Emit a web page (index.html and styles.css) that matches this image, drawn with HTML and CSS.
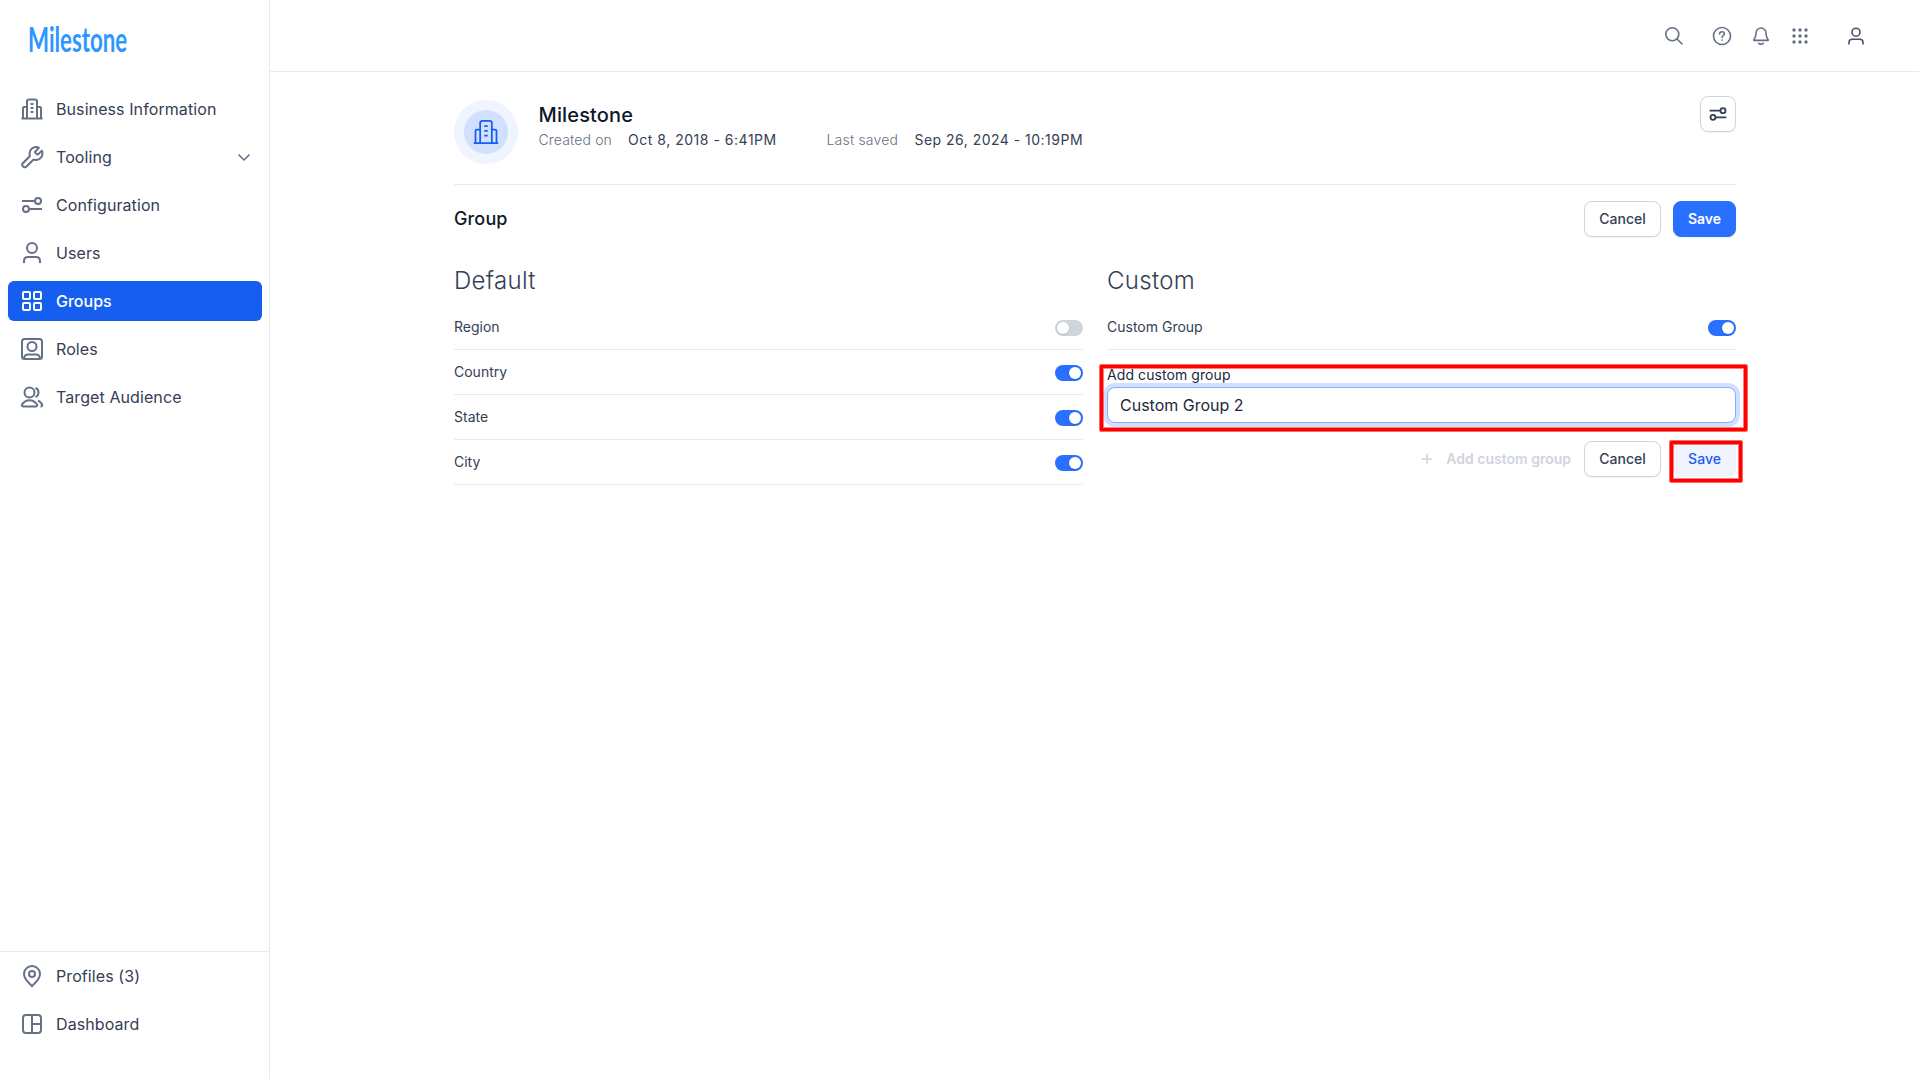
FILE: index.html
```html
<!DOCTYPE html>
<html lang="en">
<head>
<meta charset="utf-8">
<title>Milestone - Groups</title>
<link rel="stylesheet" href="styles.css">
</head>
<body>
<svg class="sprite" aria-hidden="true">
  <symbol id="building" viewBox="0 0 24 24"><path d="M1.500 21.500h21M3 21.500V11.200c0-.7.5-1.200 1.200-1.200H7m10 0h2.800c.7 0 1.200.500 1.200 1.200v10.300M7 21.500V4.200C7 3 7.800 2.500 9 2.500h6c1.200 0 2 .5 2 1.700v17.300M10.500 7h3M10.500 11h3M10.500 15h3"/></symbol>
  <symbol id="sliders" viewBox="0 0 24 24"><path d="M2 8h13M9 16h13"/><circle cx="18" cy="8" r="3"/><circle cx="6" cy="16" r="3"/></symbol>
  <symbol id="user" viewBox="0 0 24 24"><circle cx="12" cy="7" r="5"/><path d="M4 22v-2c0-2.600 1.400-4 4-4h8c2.600 0 4 1.400 4 4v2"/></symbol>
</svg>
<div class="app">
  <aside class="sidebar">
    <div class="brand"><span class="logo">Milestone</span></div>
    <nav class="nav">
      <a class="item"><svg class="icon"><use href="#building"/></svg>Business Information</a>
      <a class="item"><svg class="icon" viewBox="0 0 24 24"><path d="M15.600 6.300c-.4.400-.6.600-.6.900 0 .3.200.5.600.9l1 1c.4.400.6.500.9.500s.5-.2.900-.5l3.500-3.500c.4.900.6 1.800.6 2.800a6.500 6.500 0 0 1-8.100 6.300c-.5-.1-.8-.1-1 0-.2.100-.3.200-.6.500l-6.500 6.500a2.500 2.500 0 0 1-3.500-3.500l6.500-6.500c.3-.3.4-.4.500-.6.100-.2.100-.5 0-1A6.500 6.500 0 0 1 18.800 2.600z"/></svg>Tooling<svg class="chevron" viewBox="0 0 16 16"><path d="M2.500 5.500 8 11l5.500-5.500"/></svg></a>
      <a class="item"><svg class="icon"><use href="#sliders"/></svg>Configuration</a>
      <a class="item"><svg class="icon"><use href="#user"/></svg>Users</a>
      <a class="item active"><svg class="icon" viewBox="0 0 24 24"><rect x="3" y="3" width="7" height="7" rx="1"/><rect x="14" y="3" width="7" height="7" rx="1"/><rect x="3" y="14" width="7" height="7" rx="1"/><rect x="14" y="14" width="7" height="7" rx="1"/></svg>Groups</a>
      <a class="item"><svg class="icon" viewBox="0 0 24 24"><rect x="2" y="2" width="20" height="20" rx="2.500"/><circle cx="12" cy="9.500" r="4.500"/><path d="M4 21.500c.4-2.700 1.700-4 4-4h8c2.300 0 3.600 1.300 4 4"/></svg>Roles</a>
      <a class="item"><svg class="icon" viewBox="0 0 24 24"><circle cx="9.500" cy="7.500" r="5"/><path d="M2 19.500c1.800-2.800 4.500-4.300 7.500-4.300s5.700 1.500 7.500 4.300c.6 1 0 2-1 2H3c-1 0-1.600-1-1-2zM15.500 3c1.900.7 3 2.400 3 4.500s-1.100 3.800-3 4.500M18 15.500c1.600.7 3 2 4 3.700.6 1 .2 2.300-1.500 2.300"/></svg>Target Audience</a>
    </nav>
    <nav class="nav foot">
      <a class="item"><svg class="icon" viewBox="0 0 24 24"><circle cx="12" cy="10" r="3"/><path d="M12 22.300c-2-3-8-6.300-8-12.300a8 8 0 0 1 16 0c0 6-6 9.300-8 12.300z"/></svg>Profiles (3)</a>
      <a class="item"><svg class="icon" viewBox="0 0 24 24"><rect x="3" y="3" width="18" height="18" rx="3"/><path d="M12 3v18M12 12h9"/></svg>Dashboard</a>
    </nav>
  </aside>
  <div class="page">
    <header class="topbar">
      <svg class="tool search" viewBox="0 0 20 20"><circle cx="8.300" cy="8.300" r="6.500"/><path d="m13 13 5 5"/></svg>
      <svg class="tool help" viewBox="0 0 20 20"><circle cx="10" cy="10" r="8.500"/><path d="M7.500 8c.2-1.400 1.200-2.200 2.500-2.200s2.400.9 2.400 2.200c0 1.600-2.400 1.800-2.400 3.400M10 14v.3"/></svg>
      <svg class="tool bell" viewBox="0 0 20 20"><path d="M7.700 17.300c.6.500 1.400.8 2.300.8s1.700-.3 2.300-.8M15 7A5 5 0 0 0 5 7c0 2.600-.6 4.300-1.400 5.500-.7 1-1 1.500-.9 1.600 0 .2.100.3.200.3h14.200c.1 0 .2-.1.200-.3.100-.1-.2-.6-.9-1.600C15.600 11.300 15 9.600 15 7z"/></svg>
      <svg class="tool apps" viewBox="0 0 20 20"><circle cx="4" cy="4" r="1.700"/><circle cx="10" cy="4" r="1.700"/><circle cx="16" cy="4" r="1.700"/><circle cx="4" cy="10" r="1.700"/><circle cx="10" cy="10" r="1.700"/><circle cx="16" cy="10" r="1.700"/><circle cx="4" cy="16" r="1.700"/><circle cx="10" cy="16" r="1.700"/><circle cx="16" cy="16" r="1.700"/></svg>
      <svg class="tool account" viewBox="0 0 20 20"><circle cx="10" cy="6.200" r="4"/><path d="M3 18v-1.500c0-2 1.200-3.200 3.200-3.200h7.600c2 0 3.200 1.200 3.200 3.200V18"/></svg>
    </header>
    <main class="content">
      <section class="profile">
        <div class="avatar"><div class="disc"><svg class="icon"><use href="#building"/></svg></div></div>
        <div class="info">
          <h1 class="name">Milestone</h1>
          <dl class="dates">
            <div class="date"><dt>Created on</dt><dd class="created">Oct 8, 2018 - 6:41PM</dd></div>
            <div class="date"><dt class="saved">Last saved</dt><dd class="updated">Sep 26, 2024 - 10:19PM</dd></div>
          </dl>
        </div>
        <button class="btn square"><svg class="icon"><use href="#sliders"/></svg></button>
      </section>
      <section class="bar">
        <h2 class="title">Group</h2>
        <button class="btn cancel">Cancel</button>
        <button class="btn primary">Save</button>
      </section>
      <div class="columns">
        <section>
          <h3 class="heading">Default</h3>
          <div class="row"><span>Region</span><i class="switch"></i></div>
          <div class="row"><span>Country</span><i class="switch on"></i></div>
          <div class="row"><span>State</span><i class="switch on"></i></div>
          <div class="row"><span>City</span><i class="switch on"></i></div>
        </section>
        <section>
          <h3 class="heading">Custom</h3>
          <div class="row"><span>Custom Group</span><i class="switch on"></i></div>
          <div class="field highlight">
            <label class="label" for="group">Add custom group</label>
            <input class="input" id="group" type="text" value="Custom Group 2">
          </div>
          <div class="actions">
            <button class="add"><svg class="plus" viewBox="0 0 12 12"><path d="M6 .7v10.600M.7 6h10.600"/></svg><span>Add custom group</span></button>
            <button class="btn cancel">Cancel</button>
            <div class="highlight small"><button class="btn soft">Save</button></div>
          </div>
        </section>
      </div>
    </main>
  </div>
</div>
</body>
</html>
```
FILE: styles.css
```css
* { box-sizing: border-box; }

body {
  margin: 0;
  background: #fff;
  color: #344054;
  font-family: Inter, "Liberation Sans", sans-serif;
}

h1, h2, h3, dl, dd { margin: 0; }

button, input { font-family: inherit; }

.sprite { display: none; }

.app { display: flex; height: 1079px; overflow: hidden; }

.sidebar {
  display: flex;
  flex-direction: column;
  flex: none;
  width: 270px;
  border-right: 1px solid #eaeaea;
}

.brand { height: 89px; padding: 19px 0 0 28px; }

.logo {
  display: inline-block;
  font: 700 34px/40px Lato, sans-serif;
  color: #2e97ff;
  transform: scaleX(0.655);
  transform-origin: 0 0;
}

.nav { display: flex; flex-direction: column; gap: 8px; padding: 0 7px 0 8px; }

.foot {
  height: 128px;
  margin-top: auto;
  padding-top: 4px;
  border-top: 1px solid #eaeaea;
}

.item {
  display: flex;
  align-items: center;
  gap: 12px;
  height: 40px;
  padding: 0 10px 0 12px;
  border-radius: 6px;
  font-size: 16px;
  line-height: 24px;
  letter-spacing: 0.09px;
}

.item .icon, .chevron { color: #667085; }

.item.active { background: #155eef; color: #fff; font-weight: 500; letter-spacing: 0; }

.active .icon { color: #fff; }

.icon, .chevron, .tool, .plus {
  flex: none;
  fill: none;
  stroke: currentColor;
  stroke-width: 2;
  stroke-linejoin: round;
}

.icon { width: 24px; height: 24px; }

.chevron { width: 16px; height: 16px; margin-left: auto; stroke-width: 1.500; }

.page { flex: 1; }

.topbar {
  display: flex;
  justify-content: flex-end;
  align-items: center;
  height: 72px;
  padding-right: 53px;
  border-bottom: 1px solid #eaeaea;
  color: #667085;
}

.tool { width: 20px; height: 20px; stroke-width: 1.600; stroke-linecap: round; }

.help { margin-left: 28px; }

.bell, .apps { margin-left: 19px; }

.apps { fill: currentColor; stroke: none; }

.account { margin-left: 36px; color: #475467; }

.content { width: 1282px; margin-left: 184px; }

.profile {
  display: flex;
  align-items: flex-start;
  height: 113px;
  padding-top: 28px;
  border-bottom: 1px solid #eaeaea;
}

.avatar {
  padding: 10px;
  border-radius: 50%;
  background: #eff4ff;
}

.disc {
  display: flex;
  align-items: center;
  justify-content: center;
  width: 44px;
  height: 44px;
  border-radius: 50%;
  background: #d1e0ff;
  color: #155eef;
}

.disc .icon { width: 28px; height: 28px; stroke-width: 1.500; }

.info { flex: 1; padding-left: 20.500px; }

.name {
  font-size: 20px;
  line-height: 30px;
  font-weight: 500;
  letter-spacing: 0.15px;
  color: #101828;
}

.dates { display: flex; font-size: 14px; line-height: 20px; }

.date { display: flex; }

.date dt { width: 89.500px; color: #667085; font-weight: 300; letter-spacing: 0.15px; }

.created { width: 198.500px; letter-spacing: 0.52px; }

.date dt.saved { width: 88px; letter-spacing: 0.2px; }

.updated { letter-spacing: 0.48px; }

.btn {
  height: 36px;
  padding: 0 0 2px;
  border: 1px solid #d0d5dd;
  border-radius: 8px;
  background: #fff;
  box-shadow: 0 1px 2px rgba(16, 24, 40, 0.06);
  color: #344054;
  font-size: 14px;
  font-weight: 500;
}

.square {
  display: flex;
  align-items: center;
  justify-content: center;
  width: 36px;
  margin-top: -4px;
  padding: 0;
}

.square .icon { width: 20px; height: 20px; stroke-width: 2.200; }

.cancel { width: 77px; }

.primary { width: 63px; border-color: #2970ff; background: #2970ff; color: #fff; font-weight: 600; }

.soft { width: 63px; border-color: #eff4ff; background: #eff4ff; box-shadow: none; color: #155eef; }

.bar { display: flex; align-items: center; gap: 12px; padding-top: 16px; }

.title { flex: 1; color: #101828; font-size: 18px; line-height: 28px; font-weight: 500; letter-spacing: 0.15px; }

.columns { display: grid; grid-template-columns: 1fr 1fr; gap: 24px; padding-top: 28px; }

.heading { height: 40px; font-size: 24px; line-height: 32px; font-weight: 300; letter-spacing: 0.3px; }

.row {
  display: flex;
  align-items: center;
  justify-content: space-between;
  height: 45px;
  border-bottom: 1px solid #eaeaea;
  font-size: 14px;
}

.row span { padding-bottom: 2px; }

.switch {
  width: 28px;
  height: 16px;
  margin-top: 2px;
  padding: 2px;
  border-radius: 8px;
  background: #d0d5dd;
}

.switch::before {
  content: "";
  display: block;
  width: 12px;
  height: 12px;
  border-radius: 50%;
  background: #fff;
  box-shadow: 0 1px 2px rgba(16, 24, 40, 0.15);
}

.on { background: #2970ff; }

.on::before { margin-left: 12px; }

.field { padding-top: 15px; }

.label { display: block; height: 22px; font-size: 14px; line-height: 20px; letter-spacing: 0.08px; color: #1d2939; }

.input {
  display: block;
  width: 100%;
  height: 36px;
  padding: 0 12px;
  border: 1px solid #84adff;
  border-radius: 8px;
  outline: none;
  box-shadow: 0 0 0 4px #d1e0ff;
  color: #1d2939;
  font-size: 16px;
}

.highlight { position: relative; }

/* Callout frame around the control being explained */
.highlight::after {
  content: "";
  position: absolute;
  inset: 15px -11px -8px -7px;
  border: 3px solid #f00;
  border-radius: 1px;
  box-shadow: 0 0 0 1px rgba(255, 0, 0, 0.6), inset 0 0 0 1px rgba(255, 0, 0, 0.5);
  pointer-events: none;
}

.highlight.small::after { inset: 0 -6px -5px -3px; }

.actions {
  display: flex;
  justify-content: flex-end;
  gap: 12px;
  padding-top: 18px;
}

.add {
  display: flex;
  align-items: center;
  gap: 13px;
  padding: 0 1px 0 0;
  border: 0;
  background: none;
  color: #d0d5dd;
  font-size: 14px;
  font-weight: 600;
}

.add span { padding-bottom: 2px; }

.plus { width: 12px; height: 12px; stroke-width: 1.500; }
```
